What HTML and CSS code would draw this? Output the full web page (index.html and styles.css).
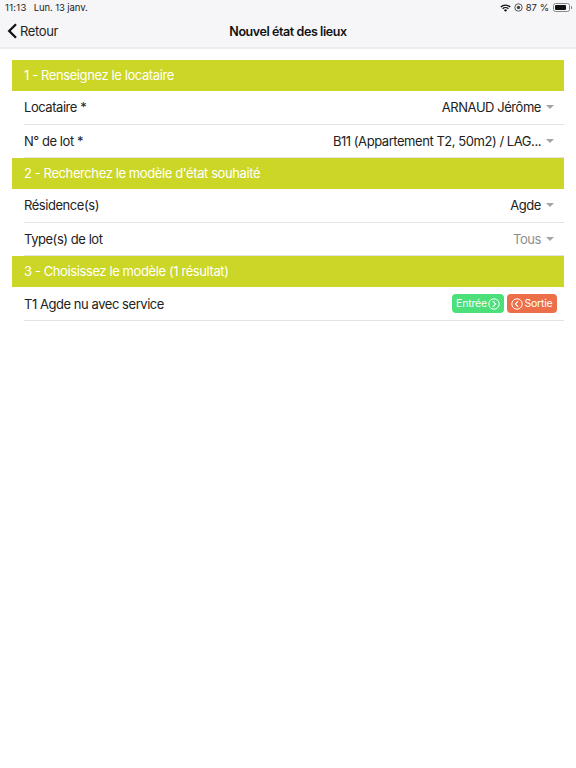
FILE: index.html
```html
<!DOCTYPE html>
<html lang="fr">
<head>
<meta charset="utf-8">
<title>Nouvel état des lieux</title>
<link rel="stylesheet" href="styles.css">
</head>
<body>
<header class="top">
  <div class="status">
    <span class="time">11:13</span>
    <span class="date">Lun. 13 janv.</span>
    <span class="status-right">
      <svg class="wifi" width="11" height="8" viewBox="0 0 12 9"><path d="M0.2 2.9A8.2 8.2 0 0 1 11.8 2.9L10.7 4A6.6 6.6 0 0 0 1.3 4Z"/><path d="M2.2 4.9A5.4 5.4 0 0 1 9.8 4.9L8.7 6A3.8 3.8 0 0 0 3.3 6Z"/><path d="M4.2 6.9A2.6 2.6 0 0 1 7.8 6.9L6 8.8Z"/></svg>
      <svg class="lock" width="9" height="9" viewBox="0 0 9 9"><circle cx="4.5" cy="4.5" r="3.7" fill="none" stroke="#444" stroke-width="0.9"/><circle cx="4.5" cy="4.5" r="1.7" fill="#444"/></svg>
      <span class="pct">87 %</span>
      <span class="battery"><span class="battery-fill"></span></span><span class="battery-tip"></span>
    </span>
  </div>
  <nav class="nav">
    <a class="back">
      <svg width="11" height="16" viewBox="0 0 11 16"><path d="M9 1.2 2.2 8 9 14.8" fill="none" stroke="#111" stroke-width="2.3"/></svg>
      <span>Retour</span>
    </a>
    <h1 class="title">Nouvel état des lieux</h1>
  </nav>
</header>
<main class="content">
  <h2 class="section">1 - Renseignez le locataire</h2>
  <div class="row"><span>Locataire *</span><span class="val">ARNAUD Jérôme<i class="caret"></i></span></div>
  <div class="row"><span>N° de lot *</span><span class="val">B11 (Appartement T2, 50m2) / LAG...<i class="caret"></i></span></div>
  <h2 class="section">2 - Recherchez le modèle d'état souhaité</h2>
  <div class="row"><span>Résidence(s)</span><span class="val">Agde<i class="caret"></i></span></div>
  <div class="row"><span>Type(s) de lot</span><span class="val muted">Tous<i class="caret"></i></span></div>
  <h2 class="section">3 - Choisissez le modèle (1 résultat)</h2>
  <div class="row result"><span>T1 Agde nu avec service</span>
    <span class="actions">
      <a class="btn in">Entrée<svg width="12" height="12" viewBox="0 0 12 12"><circle cx="6" cy="6" r="5.2" fill="none" stroke="#fff" stroke-width="1"/><path d="M4.8 3.2 7.6 6 4.8 8.8" fill="none" stroke="#fff" stroke-width="1.1"/></svg></a>
      <a class="btn out"><svg width="12" height="12" viewBox="0 0 12 12"><circle cx="6" cy="6" r="5.2" fill="none" stroke="#fff" stroke-width="1"/><path d="M7.2 3.2 4.4 6 7.2 8.8" fill="none" stroke="#fff" stroke-width="1.1"/></svg>Sortie</a>
    </span>
  </div>
</main>
</body>
</html>
```
FILE: styles.css
```css
* { box-sizing: border-box; }
html, body { margin: 0; height: 100%; background: #fff; }
body { font-family: Inter, "Liberation Sans", Arial, sans-serif; color: #222; width: 576px; height: 768px; overflow: hidden; }
.top { background: #f6f6f8; border-bottom: 2px solid #ececee; height: 49px; }
.status { height: 15px; display: flex; align-items: center; padding: 0 4px 0 5px; font-size: 9.5px; color: #222; }
.time { letter-spacing: 0.3px; }
.date { margin-left: 7px; letter-spacing: -0.1px; }
.status-right { margin-left: auto; display: flex; align-items: center; }
.wifi { fill: #111; margin-right: 3px; }
.lock { margin-right: 3px; }
.pct { margin-right: 4px; }
.battery { width: 17px; height: 9px; border: 1px solid #888; border-radius: 2.5px; padding: 1px; display: block; }
.battery-fill { display: block; height: 100%; width: 85%; background: #111; border-radius: 1px; }
.battery-tip { width: 1px; height: 3px; background: #888; margin-left: 1px; }
.nav { height: 33px; display: flex; align-items: center; justify-content: center; position: relative; }
.back { position: absolute; left: 7px; top: 8px; display: flex; align-items: center; gap: 2px; font-size: 13px; letter-spacing: -0.35px; color: #222; }
.title { margin: 0; font-size: 12.5px; font-weight: 600; letter-spacing: -0.42px; color: #111; }
.content { padding: 11px 12px 0; }
.section { margin: 0; height: 31px; padding-left: 12px; background: #ccd626; color: #fff; font-size: 13px; font-weight: normal; letter-spacing: -0.4px; line-height: 31px; }
.row { margin-left: 12px; height: 33.5px; display: flex; align-items: center; justify-content: space-between; border-bottom: 1px solid #e4e4e4; font-size: 13px; letter-spacing: -0.45px; color: #222; }
.result { padding-top: 1px; }
.val { display: flex; align-items: center; padding-right: 10px; }
.muted { color: #8e8e8e; }
.caret { width: 0; height: 0; margin-left: 5px; border-left: 4px solid transparent; border-right: 4px solid transparent; border-top: 4px solid #a5a5a5; }
.actions { display: flex; gap: 3px; padding-right: 7px; }
.btn { height: 19px; border-radius: 4px; color: #fff; font-size: 10.5px; letter-spacing: -0.2px; display: flex; align-items: center; justify-content: center; gap: 1px; }
.in { width: 52px; background: #4be07a; }
.out { width: 50px; background: #ec6f49; }
```
